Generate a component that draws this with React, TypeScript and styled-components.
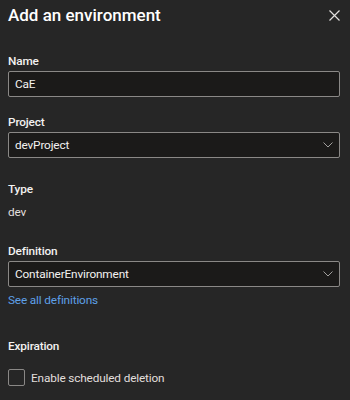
import React from "react";
import styled, { createGlobalStyle } from "styled-components";

const GlobalStyle = createGlobalStyle`
  html, body {
    margin: 0;
    padding: 0;
    background: #262626;
  }
  body {
    font-family: Roboto, "Open Sans", "Liberation Sans", sans-serif;
    color: #f3f2f1;
    -webkit-font-smoothing: antialiased;
  }
`;

const Panel = styled.div`
  width: 350px;
  height: 400px;
  box-sizing: border-box;
  padding: 3px 10px 0 8px;
  background: #262626;
  overflow: hidden;
`;

const Header = styled.div`
  display: flex;
  align-items: flex-start;
  justify-content: space-between;
  height: 24px;
`;

const Title = styled.h1`
  margin: 0;
  font-size: 17px;
  line-height: 24px;
  font-weight: 500;
  color: #ffffff;
`;

const CloseButton = styled.button`
  border: none;
  background: transparent;
  padding: 0;
  margin: 7px 0 0 0;
  width: 11px;
  height: 11px;
  display: flex;
  cursor: pointer;
`;

const Field = styled.div<{ $gap: number }>`
  display: flex;
  flex-direction: column;
  margin-top: ${(p) => p.$gap}px;
`;

const textBase = `
  font-size: 11.8px;
  line-height: 16px;
  letter-spacing: -0.15px;
`;

const Label = styled.label`
  ${textBase}
  font-weight: 500;
  color: #f3f2f1;
  margin-bottom: 2px;
`;

const Box = styled.div`
  ${textBase}
  box-sizing: border-box;
  height: 26px;
  width: 332px;
  border: 1px solid #8a8886;
  border-radius: 2px;
  background: #1b1a19;
  display: flex;
  align-items: center;
  justify-content: space-between;
  padding: 0 6px 0 6px;
  color: #f3f2f1;
`;

const Value = styled.div`
  ${textBase}
  color: #e1dfdd;
  margin-top: 5px;
`;

const Link = styled.a`
  ${textBase}
  color: #5ea0e6;
  text-decoration: none;
  margin-top: 5px;
  align-self: flex-start;
`;

const CheckRow = styled.div`
  display: flex;
  align-items: center;
  gap: 6px;
  margin-top: 13px;
`;

const CheckBox = styled.span`
  box-sizing: border-box;
  width: 17px;
  height: 17px;
  border: 1px solid #8a8886;
  border-radius: 2px;
  background: transparent;
`;

const CheckLabel = styled.span`
  ${textBase}
  color: #e1dfdd;
`;

const Chevron = () => (
  <svg width="10" height="6" viewBox="0 0 10 6" fill="none">
    <path d="M0.5 0.5 L5 5 L9.5 0.5" stroke="#a19f9d" strokeWidth="1" />
  </svg>
);

const CloseIcon = () => (
  <svg width="11" height="11" viewBox="0 0 11 11" fill="none">
    <path d="M0.5 0.5 L10.5 10.5 M10.5 0.5 L0.5 10.5" stroke="#e1dfdd" strokeWidth="1.2" />
  </svg>
);

export default function App() {
  return (
    <>
      <GlobalStyle />
      <Panel>
        <Header>
          <Title>Add an environment</Title>
          <CloseButton aria-label="Close">
            <CloseIcon />
          </CloseButton>
        </Header>

        <Field $gap={26}>
          <Label>Name</Label>
          <Box>CaE</Box>
        </Field>

        <Field $gap={17}>
          <Label>Project</Label>
          <Box>
            <span>devProject</span>
            <Chevron />
          </Box>
        </Field>

        <Field $gap={23}>
          <Label>Type</Label>
          <Value>dev</Value>
        </Field>

        <Field $gap={23}>
          <Label>Definition</Label>
          <Box>
            <span>ContainerEnvironment</span>
            <Chevron />
          </Box>
          <Link href="#">See all definitions</Link>
        </Field>

        <Field $gap={30}>
          <Label>Expiration</Label>
          <CheckRow>
            <CheckBox />
            <CheckLabel>Enable scheduled deletion</CheckLabel>
          </CheckRow>
        </Field>
      </Panel>
    </>
  );
}
